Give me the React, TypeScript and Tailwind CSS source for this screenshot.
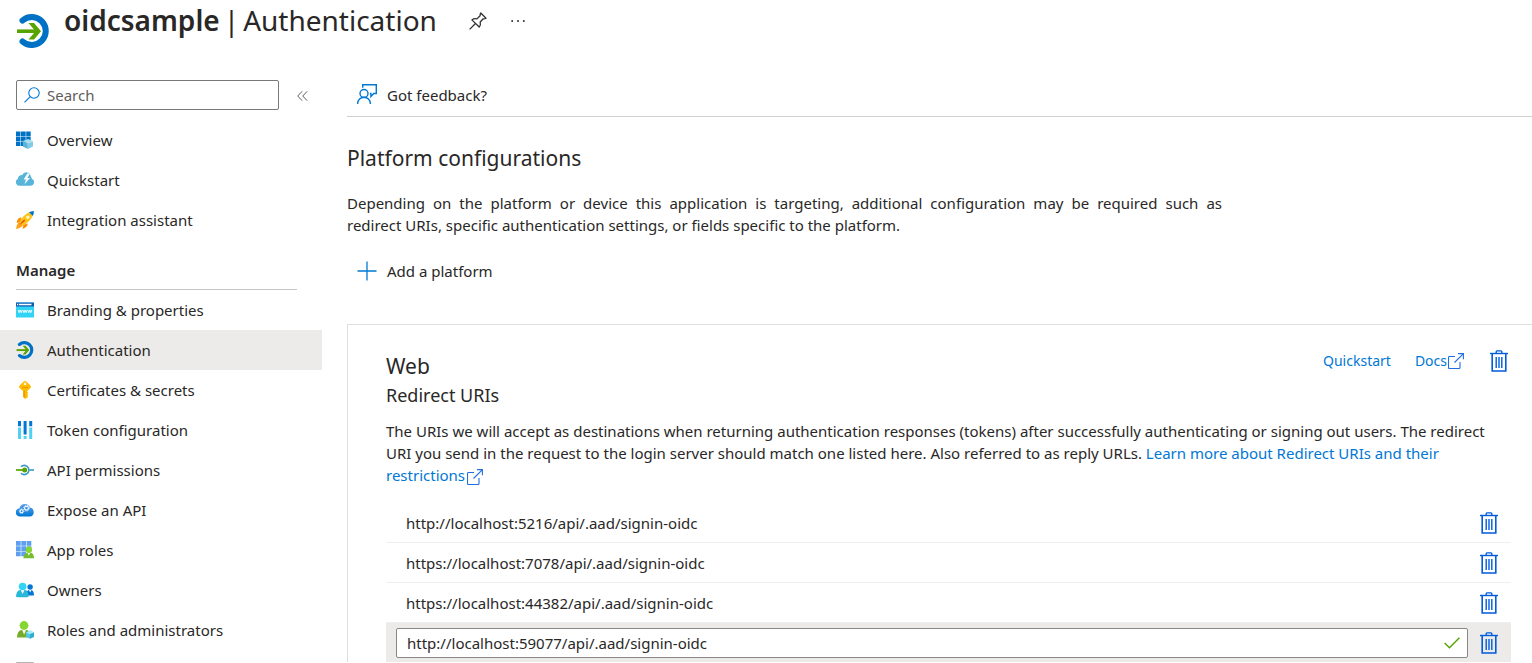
import { useState, type ReactNode } from "react";

type IconProps = { className?: string };

function AuthIcon({ className }: IconProps) {
  return (
    <svg viewBox="0 0 34 34" className={className} aria-hidden="true" fill="none">
      <path d="M6.500 6.500A14 14 0 1 1 6.500 27.500" stroke="#0072c6" strokeWidth="6" strokeLinecap="round" />
      <path d="M1 17.200H22" stroke="#57a300" strokeWidth="3.600" />
      <path d="M12.500 9H18L25 17.200L18 25.400H12.500L19.500 17.200Z" fill="#57a300" />
    </svg>
  );
}

function OverviewIcon({ className }: IconProps) {
  return (
    <svg viewBox="0 0 18 18" className={className} aria-hidden="true">
      <path
        fill="#0072c6"
        d="M0 .5h4.500v4.500H0zM5 .5h4.700v4.500H5zM10.200 .5h4.500v4.500h-4.500zM0 5.500h4.500v4.500H0zM5 5.500h4.700v4.500H5zM10.200 5.500h4.500v4.500h-4.500zM0 10.500h4.500V15H0zM5 10.500h4.700V15H5z"
      />
      <path fill="#a5dcf0" d="M12 7.900l4.900 2-5 2.100-5-2.100z" />
      <path fill="#59b4d9" d="M6.900 10.200l4.900 2.100v5.700l-4.900-2.400z" />
      <path fill="#84cbe6" d="M11.800 12.300l5.200-2.100v5.400L11.800 18z" />
    </svg>
  );
}

function QuickstartIcon({ className }: IconProps) {
  return (
    <svg viewBox="0 0 18 18" className={className} aria-hidden="true">
      <path
        fill="#59b4d9"
        d="M3.500 14.800A3.600 3.600 0 0 1 1.800 8 4.200 4.200 0 0 1 6.200 4 4.500 4.500 0 0 1 14.800 5.500 3.500 3.500 0 0 1 15.800 8 3.500 3.500 0 0 1 14.500 14.800z"
      />
      <path fill="#fff" d="M11.300 2.500l-3.600 6h2.300l-1.500 4.800 5.400-6.300h-2.600L14 2.500z" />
    </svg>
  );
}

function RocketIcon({ className }: IconProps) {
  return (
    <svg viewBox="0 0 18 18" className={className} aria-hidden="true">
      <path fill="#ff8c00" d="M5.500 6.500C2 6.500 1 9 .8 12l3.700-1zM11.600 12.400c0 3.200-2.300 4.500-5 5.300l.7-4z" />
      <path fill="#ffa21a" d="M3.600 10.800C1.400 12 .7 14.500 0 18c3.300-.7 5.700-1.700 6.900-4z" />
      <path fill="#fcc419" d="M13.200 1.200C8.900 3 5.800 6.500 3.500 11.200l3.400 3.200c4.600-2.500 8-5.500 9.800-9.700z" />
      <path fill="#e8590c" d="M8.700 8.500c-2 .8-3.800 2.600-5 5.300 2.500-1 4.500-2.700 5.700-4.700z" />
      <path fill="#0072c6" d="M18 0c-2 .1-3.500.5-5 1.300l3.800 3.600C17.500 3.500 17.900 1.900 18 0z" />
      <circle cx="11.800" cy="6.200" r="1.700" fill="#fff3bf" />
    </svg>
  );
}

function BrandingIcon({ className }: IconProps) {
  return (
    <svg viewBox="0 0 18 18" className={className} aria-hidden="true">
      <rect y="1.500" width="18" height="15" rx=".6" fill="#32d4f5" />
      <path fill="#0f5bb0" d="M.5 1.500h17a.5.5 0 0 1 .5.500v3.500H0V2a.5.5 0 0 1 .5-.5z" />
      <path fill="#fff" d="M3 2.800h12.500v1.500H3zM1 2.800h1.200v1.500H1z" />
      <path
        d="M2.200 9l.9 2.700L4.200 9l1 2.700L6.200 9M7 9l.9 2.700L9 9l1 2.700L11 9M11.800 9l.9 2.700L13.800 9l1 2.700L15.800 9"
        stroke="#fff"
        strokeWidth=".9"
        fill="none"
      />
    </svg>
  );
}

function KeyIcon({ className }: IconProps) {
  return (
    <svg viewBox="0 0 18 18" className={className} aria-hidden="true">
      <path
        fill="#ffb900"
        d="M9 0a2 2 0 0 1 1.400.6l4 3.900a1.700 1.700 0 0 1 0 2.400l-3.100 3v.8l.9.900-.9 1 .9 1-.9 1 .5.600v1L9.200 18 7 16V9.900L3.600 6.900a1.700 1.700 0 0 1 0-2.400l4-3.900A2 2 0 0 1 9 0z"
      />
      <path fill="#e09000" d="M7.700 9.800h1v6.900l-1-.8zM6 5.900h6v.8H6z" />
      <circle cx="9" cy="2.900" r="1.400" fill="#fff4cf" />
    </svg>
  );
}

function TokenIcon({ className }: IconProps) {
  return (
    <svg viewBox="0 0 18 18" className={className} aria-hidden="true">
      <path fill="#0078d4" d="M2 0h3v5.200H2zM7.600 0h3v13.500h-3zM13.200 0h3v5.200h-3z" />
      <path fill="#50d3f2" d="M2 6.500h3V18H2zM7.600 15h3v3h-3zM13.200 6.500h3V18h-3z" />
    </svg>
  );
}

function ApiPermissionsIcon({ className }: IconProps) {
  return (
    <svg viewBox="0 0 18 18" className={className} aria-hidden="true" fill="none">
      <path d="M5 5.800A4.600 4.600 0 1 1 5 12.200" stroke="#3999c6" strokeWidth="1.600" />
      <path d="M13.500 9H18" stroke="#3999c6" strokeWidth="1.600" />
      <path d="M0 9h8" stroke="#57a300" strokeWidth="1.700" />
      <circle cx="8.700" cy="9" r="2.500" fill="#57a300" />
    </svg>
  );
}

function ExposeIcon({ className }: IconProps) {
  return (
    <svg viewBox="0 0 18 18" className={className} aria-hidden="true">
      <defs>
        <linearGradient id="cloud" x1="0" y1="0" x2="0" y2="1">
          <stop stopColor="#5ea0ef" />
          <stop offset="1" stopColor="#0078d4" />
        </linearGradient>
      </defs>
      <path
        fill="url(#cloud)"
        d="M4.200 15.500A4 4 0 0 1 3.500 7.200 5.500 5.500 0 0 1 14 6.600a4.500 4.500 0 0 1-.2 8.900z"
      />
      <g fill="none" stroke="#fff">
        <circle cx="5.600" cy="10.200" r="1.500" strokeWidth="1.100" />
        <circle cx="5.600" cy="10.200" r="2.300" strokeWidth=".8" strokeDasharray=".9 .9" />
        <circle cx="10.500" cy="7.200" r="1.900" strokeWidth="1.100" />
        <circle cx="10.500" cy="7.200" r="2.800" strokeWidth=".9" strokeDasharray="1.100 1.100" />
      </g>
    </svg>
  );
}

function AppRolesIcon({ className }: IconProps) {
  return (
    <svg viewBox="0 0 18 18" className={className} aria-hidden="true">
      <path
        fill="#5ea0ef"
        d="M0 0h4.700v4.700H0zM5.300 0H10v4.700H5.300zM10.600 0h4.700v4.700h-4.700zM0 5.300h4.700V10H0zM5.300 5.300H10V10H5.300zM10.600 5.300h4.700V10h-4.700zM0 10.600h4.700v4.700H0zM5.300 10.600H10v4.700H5.300z"
      />
      <path d="M7.300 17.300c.5-3 1.500-5.400 3.800-5.500h3.600c2.300.1 3.200 2.500 3.300 5.500z" fill="#76bc2d" />
      <path d="M11.500 11.800l1.300 3 1.400-3z" fill="#fff" />
      <circle cx="12.900" cy="8.700" r="3.200" fill="#86d633" />
    </svg>
  );
}

function OwnersIcon({ className }: IconProps) {
  return (
    <svg viewBox="0 0 18 18" className={className} aria-hidden="true">
      <path d="M10 14.500c.2-3 1-5.500 3.200-5.600h1.900c2.100.1 2.900 2.500 2.900 5.600z" fill="#0078d4" />
      <path d="M12.900 8.900l1.200 2.500 1.300-2.500z" fill="#fff" />
      <circle cx="14.100" cy="6" r="2.700" fill="#0078d4" />
      <path d="M0 15.700C.3 12 1.500 9 4.200 9h4.900c2.400 0 3.300 3 3.500 6.700-.4.800-12 .8-12.600 0z" fill="#2bb8d8" />
      <path d="M4.800 9l1.800 4 1.800-4z" fill="#fff" />
      <circle cx="6.600" cy="5.500" r="3.800" fill="#32d4f5" />
    </svg>
  );
}

function RolesIcon({ className }: IconProps) {
  return (
    <svg viewBox="0 0 18 18" className={className} aria-hidden="true">
      <path d="M1 16.500c.3-4.200 1.500-7.200 4.700-7.500h4.800c3 .3 4 3.300 4.300 7.500z" fill="#76ad28" />
      <path d="M6.200 9l1.900 4.600L10 9z" fill="#fff" />
      <circle cx="8" cy="4.500" r="4.400" fill="#86d633" />
      <path fill="#50c8e8" d="M14 9.500l4 1.900v4.400l-4 2-4-2v-4.400z" />
      <path fill="#a5ecfa" d="M14 9.500l4 1.900-4 1.900-4-1.900z" />
      <path fill="#32aecd" d="M14 13.300l4-1.900v4.400l-4 2z" />
    </svg>
  );
}

function ManifestIcon({ className }: IconProps) {
  return (
    <svg viewBox="0 0 18 18" className={className} aria-hidden="true">
      <rect width="18" height="16" y="1" rx="1" fill="#b3b3b3" />
    </svg>
  );
}

function TrashIcon({ className }: IconProps) {
  return (
    <svg viewBox="0 0 18 22" className={className} aria-hidden="true" fill="none" stroke="#015cda">
      <path d="M0 3.500H18" strokeWidth="1.400" />
      <path d="M6.200 3.200V1.700q0-.8.8-.8h4q.8 0 .8.800v1.500" strokeWidth="1.400" />
      <path d="M2.200 3.500V21H15.800V3.500" strokeWidth="1.600" />
      <path d="M6.200 7v11M9 7v11M11.800 7v11" strokeWidth="1.400" />
    </svg>
  );
}

function ExternalIcon({ className }: IconProps) {
  return (
    <svg viewBox="0 0 16 16" className={className} aria-hidden="true" fill="none" stroke="#1f6fe0" strokeWidth="1.100">
      <path d="M7 3.500H1.500q-1 0-1 1V14.500q0 1 1 1H11q1 0 1-1V9" />
      <path d="M10 .6H15.400V6.200M15.200 .8L6.500 9.500" />
    </svg>
  );
}

function PinIcon({ className }: IconProps) {
  return (
    <svg viewBox="0 0 18 18" className={className} aria-hidden="true" fill="none" stroke="#323130" strokeWidth="1.300" strokeLinejoin="round">
      <path d="M11.800 1L17 6.200C15.800 7 15 6.900 14.200 6.800L11.200 10c.5 1.900.2 3.600-1 5L2.900 7.900c1.500-1.200 3.200-1.500 5-1L11.100 3.800C11 2.800 11.100 1.800 11.800 1z" />
      <path d="M6.500 11.500L.6 17.400" />
    </svg>
  );
}

function FeedbackIcon({ className }: IconProps) {
  return (
    <svg viewBox="0 0 20 20" className={className} aria-hidden="true" fill="none" stroke="#0078d4" strokeWidth="1.400">
      <circle cx="7" cy="9.500" r="4" />
      <path d="M.7 20v-.8a6.300 6 0 0 1 12.600 0v.8" />
      <path d="M5.700 3.800V.8h13.600v8.700h-2.500l-2.900 3V9.500h-1" />
    </svg>
  );
}

function SearchIcon({ className }: IconProps) {
  return (
    <svg viewBox="0 0 16 16" className={className} aria-hidden="true" fill="none" stroke="#0078d4" strokeWidth="1.100">
      <circle cx="10" cy="6" r="5.200" />
      <path d="M6.200 9.700L.5 15.400" />
    </svg>
  );
}

type Item = { label: string; Icon: (p: IconProps) => ReactNode; iconOnly?: boolean };

const topItems: Item[] = [
  { label: "Overview", Icon: OverviewIcon },
  { label: "Quickstart", Icon: QuickstartIcon },
  { label: "Integration assistant", Icon: RocketIcon },
];

const manageItems: Item[] = [
  { label: "Branding & properties", Icon: BrandingIcon },
  { label: "Authentication", Icon: AuthIcon },
  { label: "Certificates & secrets", Icon: KeyIcon },
  { label: "Token configuration", Icon: TokenIcon },
  { label: "API permissions", Icon: ApiPermissionsIcon },
  { label: "Expose an API", Icon: ExposeIcon },
  { label: "App roles", Icon: AppRolesIcon },
  { label: "Owners", Icon: OwnersIcon },
  { label: "Roles and administrators", Icon: RolesIcon },
  { label: "Manifest", Icon: ManifestIcon, iconOnly: true },
];

function NavList({ items }: { items: Item[] }) {
  return (
    <ul>
      {items.map(({ label, Icon, iconOnly }) => (
        <li key={label}>
          <a
            href="#"
            aria-label={iconOnly ? label : undefined}
            aria-current={label === "Authentication" ? "page" : undefined}
            className={
              label === "Authentication"
                ? "flex h-10 items-center gap-[13px] bg-[#edebe9] px-4"
                : "flex h-10 items-center gap-[13px] px-4"
            }
          >
            <Icon className="size-[18px] shrink-0" />
            {!iconOnly && label}
          </a>
        </li>
      ))}
    </ul>
  );
}

const uris = [
  "http://localhost:5216/api/.aad/signin-oidc",
  "https://localhost:7078/api/.aad/signin-oidc",
  "https://localhost:44382/api/.aad/signin-oidc",
];

export default function App() {
  const [uri, setUri] = useState("http://localhost:59077/api/.aad/signin-oidc");

  return (
    <div className="flex h-screen flex-col overflow-hidden bg-white font-['Noto_Sans',sans-serif] text-[15px] leading-[22px] text-[#292827]">
      <header className="flex h-20 shrink-0 items-start pl-4">
        <AuthIcon className="mt-[14px] size-[34px]" />
        <h1 className="ml-[14px] flex gap-1 text-[28px] leading-10 whitespace-nowrap">
          <span className="font-semibold">oidcsample</span>
          <span>|</span>
          <span>Authentication</span>
        </h1>
        <button type="button" aria-label="Pin" className="ml-8 mt-3">
          <PinIcon className="size-[18px]" />
        </button>
        <button type="button" aria-label="More" className="ml-6 mt-[19px]">
          <svg viewBox="0 0 14 4" className="h-1 w-[14px]" fill="#323130" aria-hidden="true">
            <circle cx="1.200" cy="2" r="1" />
            <circle cx="7" cy="2" r="1" />
            <circle cx="12.800" cy="2" r="1" />
          </svg>
        </button>
      </header>

      <div className="flex min-h-0 flex-1">
        <nav className="w-[322px] shrink-0">
          <div className="flex h-10 items-start pl-4">
            <label className="flex h-[30px] w-[263px] items-center gap-[7px] rounded-xs border border-[#7a7876] px-[7px]">
              <SearchIcon className="size-4 shrink-0" />
              <input
                type="search"
                aria-label="Search"
                placeholder="Search"
                className="min-w-0 flex-1 outline-none placeholder:text-[#605e5c]"
              />
            </label>
            <button type="button" aria-label="Collapse menu" className="ml-[18px] mt-[11px]">
              <svg viewBox="0 0 11 10" className="h-[10px] w-[11px]" fill="none" stroke="#605e5c" aria-hidden="true">
                <path d="M5.200 .3L.7 5l4.500 4.700M10.200 .3L5.700 5l4.500 4.700" />
              </svg>
            </button>
          </div>
          <NavList items={topItems} />
          <div className="ml-4 mr-[25px] flex h-[50px] items-center border-b border-[#c8c6c4] pt-3">
            <h2 className="pb-px font-semibold">Manage</h2>
          </div>
          <NavList items={manageItems} />
        </nav>

        <main className="ml-[25px] min-w-0 flex-1">
          <div className="flex h-[37px] items-start border-b border-[#d2d0ce] pl-[10px]">
            <button type="button" className="flex h-[30px] items-center gap-[10px]">
              <FeedbackIcon className="mb-0.5 size-5" />
              Got feedback?
            </button>
          </div>
          <h2 className="mt-[25px] text-[21px] leading-8">Platform configurations</h2>
          <p className="mt-[18px] max-w-[875px] text-justify">
            Depending on the platform or device this application is targeting, additional configuration may be required
            such as redirect{"\u00a0"}URIs, specific authentication settings, or fields specific to the platform.
          </p>
          <button type="button" className="mt-[15px] flex h-10 items-center gap-[10px] pl-[10px]">
            <svg viewBox="0 0 20 20" className="size-5" stroke="#0078d4" strokeWidth="1.300" aria-hidden="true">
              <path d="M10 .5V19.500M.5 10H19.500" />
            </svg>
            Add a platform
          </button>

          <section className="mt-[33px] border-t border-l border-[#e1dfdd] pt-6 pr-[21px] pl-[38px]">
            <div className="flex items-start justify-between">
              <div>
                <h3 className="text-[21px] leading-[34px]">Web</h3>
                <h4 className="text-lg leading-6">Redirect URIs</h4>
              </div>
              <div className="flex items-center gap-6 pt-px text-sm text-[#0078d4]">
                <a href="#">Quickstart</a>
                <a href="#" className="flex items-center gap-px">
                  Docs
                  <ExternalIcon className="size-4" />
                </a>
                <button type="button" aria-label="Delete Web platform" className="ml-0.5 mr-[3px]">
                  <TrashIcon className="h-[22px] w-[18px]" />
                </button>
              </div>
            </div>
            <p className="mt-[13px]">
              The URIs we will accept as destinations when returning authentication responses (tokens) after
              successfully authenticating or signing out users. The redirect URI you send in the request to the login
              server should match one listed here. Also referred to as reply URLs.{" "}
              <a href="#" className="text-[#0078d4]">
                Learn more about Redirect URIs and their restrictions
                <ExternalIcon className="ml-0.5 inline size-4" />
              </a>
            </p>
            <ul className="mt-[17px]">
              {uris.map((u) => (
                <li key={u} className="flex h-10 items-center justify-between border-b border-[#f0efee] pr-[13px] pl-5">
                  {u}
                  <button type="button" aria-label={`Delete ${u}`}>
                    <TrashIcon className="h-[22px] w-[18px]" />
                  </button>
                </li>
              ))}
              <li className="flex h-[39px] items-center bg-[#edebe9] pr-[13px] pl-[10px]">
                <div className="mr-3 flex h-[30px] flex-1 items-center rounded-xs border border-[#8a8886] bg-white pr-[7px] pl-[10px]">
                  <input
                    aria-label="Redirect URI"
                    value={uri}
                    onChange={(e) => setUri(e.target.value)}
                    className="min-w-0 flex-1 outline-none"
                  />
                  <svg viewBox="0 0 16 12" className="h-3 w-4" fill="none" stroke="#57a300" strokeWidth="1.400" aria-hidden="true">
                    <path d="M.6 6L5.500 10.800L15.400 .8" />
                  </svg>
                </div>
                <button type="button" aria-label={`Delete ${uri}`}>
                  <TrashIcon className="h-[22px] w-[18px]" />
                </button>
              </li>
            </ul>
          </section>
        </main>
      </div>
    </div>
  );
}
